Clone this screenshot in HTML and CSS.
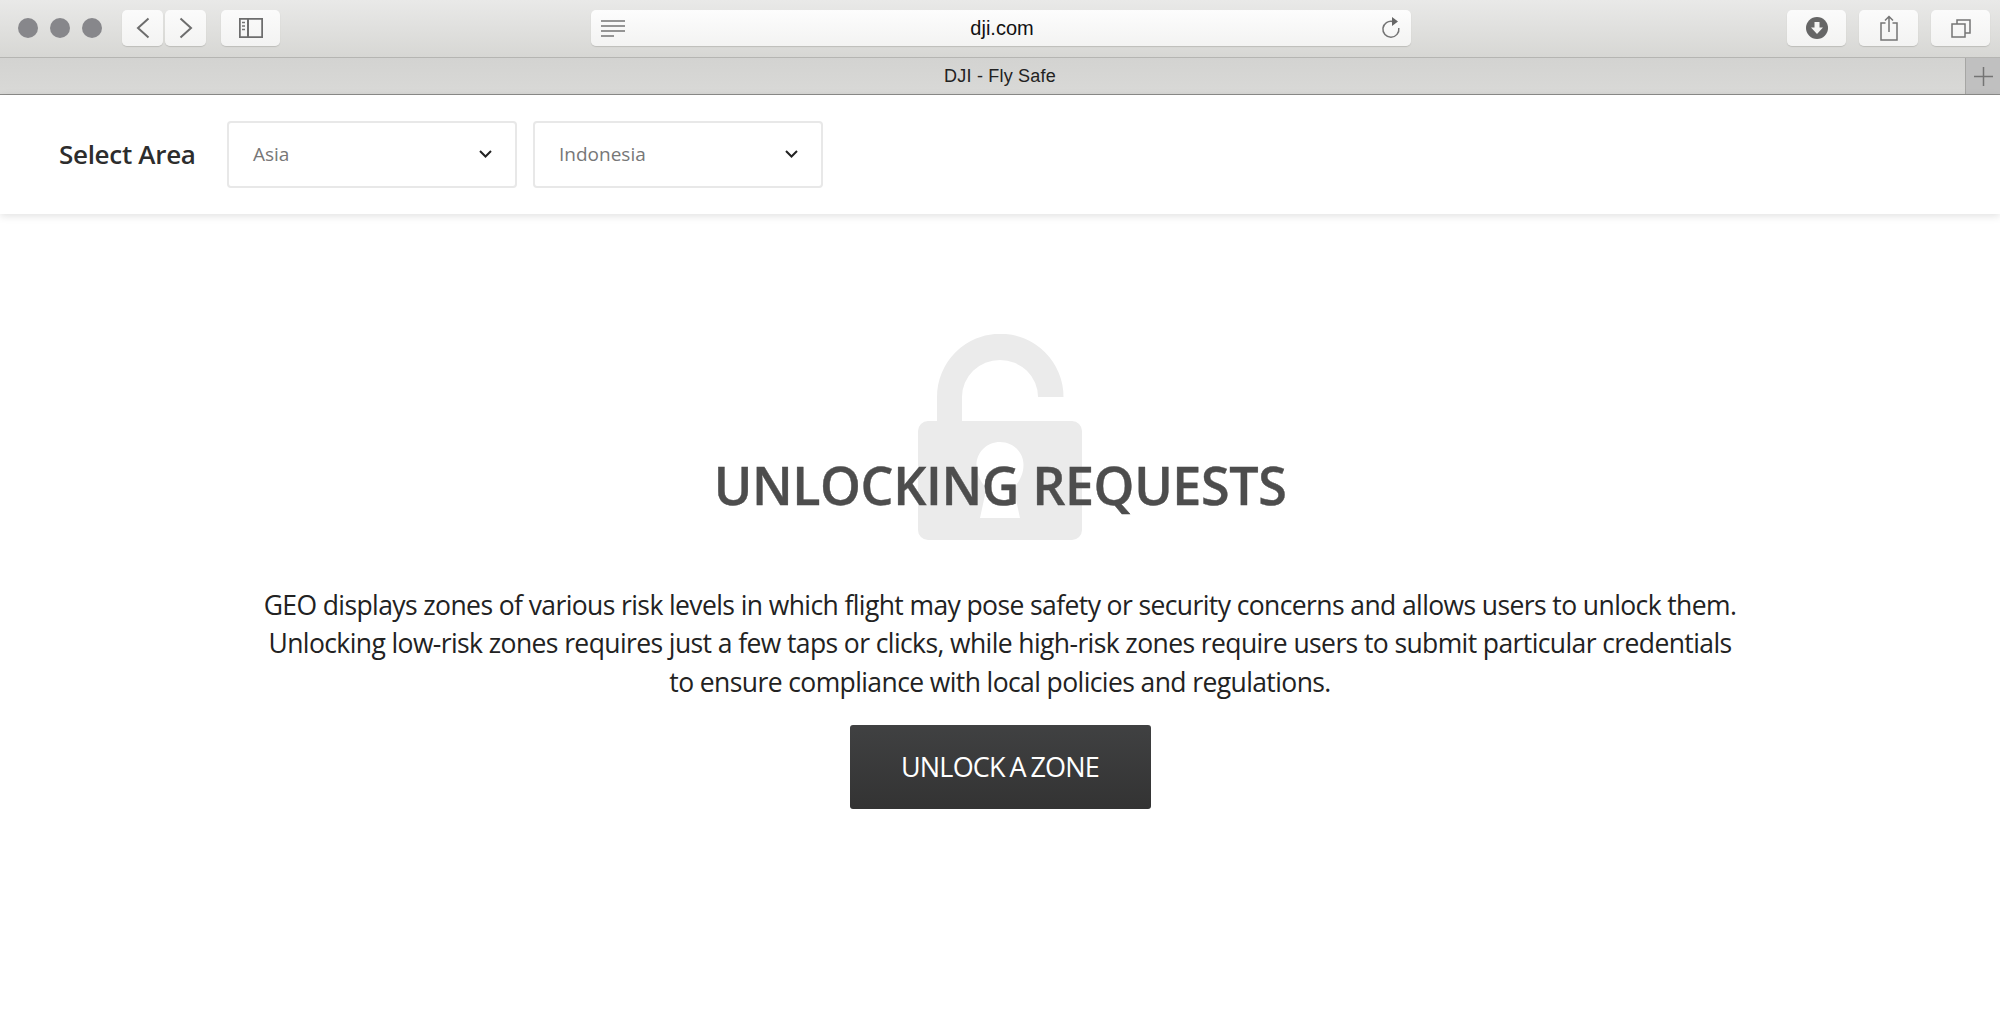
FILE: index.html
```html
<!DOCTYPE html>
<html>
<head>
  <meta charset="UTF-8">
  <title>DJI - Fly Safe</title>
  <link rel="stylesheet" href="styles.css">
</head>
<body>
  <div class="toolbar">
    <div class="lights">
      <span class="light"></span>
      <span class="light"></span>
      <span class="light"></span>
    </div>
    <div class="nav-pair">
      <button class="tool-btn nav-btn">
        <svg width="14" height="22" viewBox="0 0 14 22"><path d="M12.500 1.500 2 11l10.500 9.500" class="line"/></svg>
      </button>
      <button class="tool-btn nav-btn">
        <svg width="14" height="22" viewBox="0 0 14 22"><path d="M1.500 1.500 12 11 1.500 20.500" class="line"/></svg>
      </button>
    </div>
    <button class="tool-btn sidebar-btn">
      <svg width="24" height="20" viewBox="0 0 24 20">
        <rect x="0.75" y="0.75" width="22.5" height="18.5" class="line"/>
        <path d="M9 1v18" class="line"/>
        <path d="M3 4.500h3M3 8h3M3 11.500h3" class="line thin"/>
      </svg>
    </button>
    <div class="address">
      <svg class="reader" width="24" height="17" viewBox="0 0 24 17">
        <path d="M0 1h24M0 6h24M0 11h24M0 16h13" class="line thin"/>
      </svg>
      <span class="url">dji.com</span>
      <svg class="reload" width="24" height="24" viewBox="0 0 24 24">
        <path d="M14 5.500A8 8 0 1 0 19.800 12" class="line thin"/>
        <path d="M13 1v9l6-4.500z" class="solid"/>
      </svg>
    </div>
    <div class="tool-right">
      <button class="tool-btn right-btn">
        <svg width="22" height="22" viewBox="0 0 22 22">
          <circle cx="11" cy="11" r="11" class="solid"/>
          <path d="M8.500 5h5v5.500h3.500L11 17 5 10.500h3.500z" fill="#f3f3f2"/>
        </svg>
      </button>
      <button class="tool-btn right-btn">
        <svg width="18" height="26" viewBox="0 0 18 26">
          <path d="M5.500 8H1v17h16V8h-4.500" class="line thin"/>
          <path d="M9 17V1.500M5 5.500l4-4 4 4" class="line thin"/>
        </svg>
      </button>
      <button class="tool-btn right-btn">
        <svg width="20" height="19" viewBox="0 0 20 19">
          <rect x="1" y="5" width="13" height="13" class="line thin"/>
          <path d="M6 5V1h13v13h-5" class="line thin"/>
        </svg>
      </button>
    </div>
  </div>

  <div class="tabbar">
    <span class="tab-title">DJI - Fly Safe</span>
    <span class="tab-add">
      <svg width="19" height="19" viewBox="0 0 19 19"><path d="M9.500 0v19M0 9.500h19" class="line thin"/></svg>
    </span>
  </div>

  <div class="area-bar">
    <span class="area-label">Select Area</span>
    <div class="select-box">
      <span>Asia</span>
      <svg width="13" height="8" viewBox="0 0 13 8"><path d="M1 1l5.500 5.500L12 1" class="chevron"/></svg>
    </div>
    <div class="select-box">
      <span>Indonesia</span>
      <svg width="13" height="8" viewBox="0 0 13 8"><path d="M1 1l5.500 5.500L12 1" class="chevron"/></svg>
    </div>
  </div>

  <div class="hero">
    <svg class="lock" width="164" height="207" viewBox="0 0 164 207">
      <path fill-rule="evenodd" fill="#ebebeb" d="M19 87V63a63 63 0 0 1 126.500 0H120a38 37 0 0 0-76 0v24h110a10 10 0 0 1 10 10v99a10 10 0 0 1-10 10H10a10 10 0 0 1-10-10V97a10 10 0 0 1 10-10zM82 108c-13 0-23.500 10-23.500 23 0 10 5 18 10 23l-6.500 30h40l-6.500-30c5-5 10-13 10-23 0-13-10.500-23-23.500-23z"/>
    </svg>
    <h1 class="hero-title">UNLOCKING REQUESTS</h1>
    <p class="hero-text">GEO displays zones of various risk levels in which flight may pose safety or security concerns and allows users to unlock them.<br>Unlocking low-risk zones requires just a few taps or clicks, while high-risk zones require users to submit particular credentials<br>to ensure compliance with local policies and regulations.</p>
    <a class="unlock-btn" href="#">UNLOCK A ZONE</a>
  </div>
</body>
</html>
```

FILE: styles.css
```css
html, body {
  margin: 0;
  padding: 0;
  height: 100%;
  overflow: hidden;
  background-color: #ffffff;
  font-family: "Open Sans", sans-serif;
}

.line {
  fill: none;
  stroke: #6d6d6d;
  stroke-width: 2;
}

.thin {
  stroke: #747474;
  stroke-width: 1.5;
}

.solid {
  fill: #666666;
}

.toolbar {
  height: 47px;
  display: flex;
  align-items: flex-start;
  padding-top: 10px;
  background: linear-gradient(#e9e9e8, #d7d7d4);
  border-bottom: 1px solid #b5b5b2;
}

.lights {
  display: flex;
  gap: 12px;
  margin: 8px 0 0 18px;
}

.light {
  width: 20px;
  height: 20px;
  border-radius: 50%;
  background-color: #87878b;
}

.tool-btn {
  display: flex;
  align-items: center;
  justify-content: center;
  height: 36px;
  padding: 0;
  border: none;
  border-radius: 5px;
  background: linear-gradient(#fbfbfb, #f3f3f2);
  box-shadow: 0 1px 1px #bdbdba;
}

.nav-pair {
  display: flex;
  gap: 2px;
  margin-left: 20px;
}

.nav-btn {
  width: 41px;
}

.sidebar-btn {
  width: 59px;
  margin-left: 15px;
}

.address {
  width: 820px;
  height: 36px;
  margin-left: 311px;
  display: flex;
  align-items: center;
  justify-content: space-between;
  padding: 0 8px 0 10px;
  box-sizing: border-box;
  border-radius: 5px;
  background: linear-gradient(#fdfdfd, #f3f3f2);
  box-shadow: 0 1px 1px #bdbdba;
}

.url {
  font-family: "Liberation Sans", sans-serif;
  font-size: 20px;
  color: #111111;
}

.tool-right {
  display: flex;
  gap: 13px;
  margin-left: auto;
  margin-right: 10px;
}

.right-btn {
  width: 59px;
}

.tabbar {
  height: 36px;
  display: flex;
  align-items: center;
  justify-content: center;
  position: relative;
  background: linear-gradient(#d3d3d1, #d9d9d7);
  border-bottom: 1px solid #8c8c8a;
}

.tab-title {
  font-family: "Liberation Sans", sans-serif;
  font-size: 18px;
  letter-spacing: 0.2px;
  color: #222222;
}

.tab-add {
  position: absolute;
  right: 0;
  top: 0;
  bottom: 0;
  width: 34px;
  display: flex;
  align-items: center;
  justify-content: center;
  background-color: #c0c0c0;
  border-left: 1px solid #a6a6a4;
}

.area-bar {
  height: 119px;
  display: flex;
  align-items: center;
  padding-left: 59px;
  position: relative;
  background-color: #ffffff;
  box-shadow: 0 2px 8px rgba(0, 0, 0, 0.12);
}

.area-label {
  width: 168px;
  padding-bottom: 1px;
  font-size: 26px;
  font-weight: 600;
  color: #2d2d2d;
  letter-spacing: -0.3px;
}

.select-box {
  width: 290px;
  height: 67px;
  margin-right: 16px;
  padding: 0 23px 2px 24px;
  display: flex;
  align-items: center;
  justify-content: space-between;
  box-sizing: border-box;
  border: 2px solid #e8e8e8;
  border-radius: 4px;
  font-size: 19px;
  color: #777777;
}

.chevron {
  fill: none;
  stroke: #222222;
  stroke-width: 2;
}

.hero {
  position: relative;
  display: flex;
  flex-direction: column;
  align-items: center;
  padding-top: 236px;
}

.lock {
  position: absolute;
  left: 918px;
  top: 120px;
}

.hero-title {
  position: relative;
  margin: 0;
  font-size: 52px;
  line-height: 70px;
  font-weight: 600;
  color: #4d4d4d;
  letter-spacing: -0.4px;
  -webkit-text-stroke: 0.4px #4d4d4d;
}

.hero-text {
  margin: 66px 0 0;
  font-size: 26.500px;
  line-height: 38.300px;
  color: #222222;
  text-align: center;
  letter-spacing: -0.6px;
}

.unlock-btn {
  width: 301px;
  height: 84px;
  margin-top: 24px;
  display: flex;
  align-items: center;
  justify-content: center;
  border-radius: 3px;
  background: linear-gradient(#404142, #333333);
  color: #ffffff;
  font-size: 27px;
  font-weight: 500;
  letter-spacing: -0.8px;
  word-spacing: -1.500px;
  text-decoration: none;
}
```
